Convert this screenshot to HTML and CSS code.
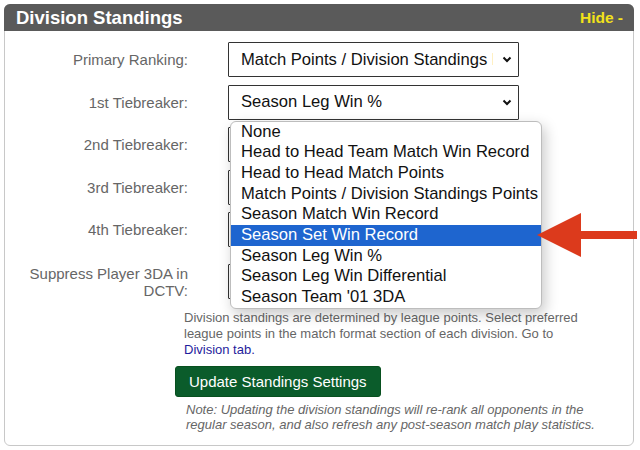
FILE: index.html
```html
<!DOCTYPE html>
<html lang="en">
<head>
<meta charset="utf-8">
<title>Division Standings</title>
<link rel="stylesheet" href="styles.css">
</head>
<body>
<div class="panel">
  <div class="panel-head">
    <span class="title">Division Standings</span>
    <a class="hide">Hide -</a>
  </div>
  <div class="panel-body">
    <div class="form">
      <label class="lbl">Primary Ranking:</label>
      <div class="select"><span class="val">Match Points / Division Standings Points</span><svg class="chev" width="10" height="7" viewBox="0 0 10 7"><polyline points="1.5,1.5 5,5 8.5,1.5" fill="none" stroke="#111" stroke-width="2"/></svg></div>

      <label class="lbl">1st Tiebreaker:</label>
      <div class="select-wrap">
        <div class="select"><span class="val">Season Leg Win %</span><svg class="chev" width="10" height="7" viewBox="0 0 10 7"><polyline points="1.5,1.5 5,5 8.5,1.5" fill="none" stroke="#111" stroke-width="2"/></svg></div>
        <ul class="popup">
          <li>None</li>
          <li>Head to Head Team Match Win Record</li>
          <li>Head to Head Match Points</li>
          <li>Match Points / Division Standings Points</li>
          <li>Season Match Win Record</li>
          <li class="active">Season Set Win Record</li>
          <li>Season Leg Win %</li>
          <li>Season Leg Win Differential</li>
          <li>Season Team '01 3DA</li>
        </ul>
      </div>

      <label class="lbl">2nd Tiebreaker:</label>
      <div class="select"><span class="val"></span><svg class="chev" width="10" height="7" viewBox="0 0 10 7"><polyline points="1.5,1.5 5,5 8.5,1.5" fill="none" stroke="#111" stroke-width="2"/></svg></div>

      <label class="lbl">3rd Tiebreaker:</label>
      <div class="select"><span class="val"></span><svg class="chev" width="10" height="7" viewBox="0 0 10 7"><polyline points="1.5,1.5 5,5 8.5,1.5" fill="none" stroke="#111" stroke-width="2"/></svg></div>

      <label class="lbl">4th Tiebreaker:</label>
      <div class="select"><span class="val"></span><svg class="chev" width="10" height="7" viewBox="0 0 10 7"><polyline points="1.5,1.5 5,5 8.5,1.5" fill="none" stroke="#111" stroke-width="2"/></svg></div>

      <label class="lbl suppress">Suppress Player 3DA in DCTV:</label>
      <div class="select suppress"><span class="val"></span><svg class="chev" width="10" height="7" viewBox="0 0 10 7"><polyline points="1.5,1.5 5,5 8.5,1.5" fill="none" stroke="#111" stroke-width="2"/></svg></div>
    </div>

    <p class="help">Division standings are determined by league points. Select preferred league points in the match format section of each division. Go to <a class="link">Division tab.</a></p>

    <button class="btn">Update Standings Settings</button>

    <p class="note">Note: Updating the division standings will re-rank all opponents in the regular season, and also refresh any post-season match play statistics.</p>
  </div>

  <svg class="arrow" width="100" height="46" viewBox="0 0 100 46"><polygon points="0,23 44,1 44,19 100,19 100,27 44,27 44,45" fill="#dc3a1c"/></svg>
</div>
</body>
</html>
```
FILE: styles.css
```css
* { box-sizing: border-box; }

body {
  margin: 0;
  background: #fff;
  font-family: "Liberation Sans", Arial, sans-serif;
  color: #111;
}

.panel {
  position: relative;
  margin: 4px 0 0 4px;
  width: 630px;
  height: 442px;
  border: 1px solid #c8c8c8;
  border-radius: 6px;
  background: #fff;
}

.panel-head {
  height: 27px;
  margin: -1px -1px 0 -1px;
  background: #5a5a5a;
  border-radius: 6px 6px 0 0;
  display: flex;
  align-items: center;
  justify-content: space-between;
  padding: 0 11px 0 12px;
}

.title {
  color: #fff;
  font-weight: bold;
  font-size: 18.5px;
}

.hide {
  color: #f2e21a;
  font-weight: bold;
  font-size: 15.5px;
}

.panel-body {
  padding-top: 11px;
}

.form {
  display: grid;
  grid-template-columns: 183px 291px;
  column-gap: 40px;
  row-gap: 7.5px;
  align-items: center;
}

.lbl {
  text-align: right;
  color: #666;
  font-size: 15px;
  line-height: 17px;
}

.suppress {
  margin-top: 9.5px;
}

.select-wrap {
  position: relative;
}

.select {
  display: flex;
  align-items: center;
  height: 35px;
  border: 1px solid #333;
  border-radius: 1px;
  padding: 0 6px 0 12px;
  font-size: 16.6px;
  background: #fff;
}

.val {
  flex: 1;
  overflow: hidden;
  white-space: nowrap;
  margin-right: 9px;
}

.chev {
  flex: none;
}

.popup {
  position: absolute;
  top: 36px;
  left: 2px;
  width: 312px;
  margin: 0;
  padding: 0;
  list-style: none;
  background: #fff;
  border: 1px solid #bdbdbd;
  border-radius: 6px;
  box-shadow: 3px 5px 14px rgba(0, 0, 0, 0.22);
  overflow: hidden;
  z-index: 2;
}

.popup li {
  height: 20.7px;
  line-height: 20.7px;
  padding-left: 10px;
  font-size: 16.6px;
  white-space: nowrap;
  color: #111;
}

.popup li.active {
  background: #1e65cf;
  color: #fff;
}

.help {
  margin: 11px 0 0 179px;
  width: 402px;
  font-size: 13px;
  line-height: 16px;
  color: #666;
}

.link {
  color: #1f1d9c;
}

.btn {
  display: block;
  margin: 8px 0 0 170px;
  height: 31px;
  padding: 0 13px;
  border: 1px solid #08501f;
  border-radius: 3px;
  background: #0b5c2b;
  color: #fff;
  font-family: "Liberation Sans", Arial, sans-serif;
  font-size: 15px;
}

.note {
  margin: 5px 0 0 181px;
  width: 418px;
  font-size: 13px;
  line-height: 15px;
  font-style: italic;
  color: #666;
}

.arrow {
  position: absolute;
  left: 532px;
  top: 207px;
  z-index: 3;
}
```
